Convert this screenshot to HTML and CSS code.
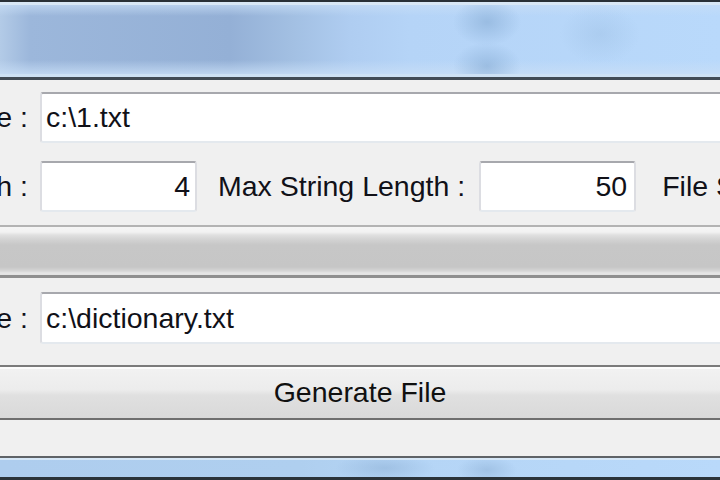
FILE: index.html
```html
<!DOCTYPE html>
<html>
<head>
<meta charset="utf-8">
<link rel="stylesheet" href="styles.css">
</head>
<body>
<div class="window">
  <div class="titlebar"></div>
  <div class="form">
    <div class="row row-first">
      <div class="label"><span>Output File :</span></div>
      <div class="field field-wide">c:\1.txt</div>
    </div>
    <div class="row row-second">
      <div class="label"><span>Min String Length :</span></div>
      <div class="field field-num">4</div>
      <div class="inline-label">Max String Length :</div>
      <div class="field field-num field-num2">50</div>
      <div class="inline-label inline-label-last">File Size :</div>
    </div>
    <div class="splitter"></div>
    <div class="row row-third">
      <div class="label"><span>Dictionary File :</span></div>
      <div class="field field-wide">c:\dictionary.txt</div>
    </div>
    <div class="button">Generate File</div>
    <div class="statusbar"></div>
  </div>
</div>
</body>
</html>
```

FILE: styles.css
```css
html, body {
  margin: 0;
  padding: 0;
  width: 720px;
  height: 480px;
  overflow: hidden;
  background: #f0f0f0;
}

.window {
  width: 720px;
  height: 480px;
  display: flex;
  flex-direction: column;
  font-family: "Liberation Sans", Arial, sans-serif;
  font-size: 28.5px;
  color: #111118;
  overflow: hidden;
}

.titlebar {
  height: 80px;
  flex: 0 0 80px;
  box-sizing: border-box;
  border-top: 2px solid #293036;
  border-bottom: 3px solid #414b55;
  box-shadow: inset 0 3px 0 #d8e7f5, inset 0 -3px 0 #cde1f4;
  background:
    radial-gradient(ellipse 34px 24px at 487px 20px, rgba(135,172,212,0.6), rgba(135,172,212,0)),
    radial-gradient(ellipse 34px 24px at 487px 64px, rgba(135,172,212,0.6), rgba(135,172,212,0)),
    radial-gradient(ellipse 40px 30px at 600px 32px, rgba(150,185,222,0.35), rgba(150,185,222,0)),
    linear-gradient(to bottom, rgba(200,222,246,0.85) 0, rgba(200,222,246,0) 14px, rgba(200,222,246,0) 58px, rgba(200,222,246,0.85) 73px),
    linear-gradient(to right, #b3cbe7 0, #9cb7db 30px, #94b0d6 230px, #a2bfe2 290px, #afcdf1 350px, #b5d4f7 410px, #b9d9fb 720px);
}

.form {
  display: flex;
  flex-direction: column;
  padding-top: 12px;
  flex: 1;
}

.row {
  display: flex;
  align-items: center;
  height: 51px;
  flex: 0 0 51px;
  white-space: nowrap;
}

.row-second { margin-top: 18px; }
.row-third { margin-top: 14px; height: 52px; flex-basis: 52px; }

.label {
  width: 28px;
  flex: 0 0 28px;
  margin-right: 12px;
  display: flex;
  justify-content: flex-end;
  overflow: hidden;
  white-space: nowrap;
}

.field {
  box-sizing: border-box;
  height: 100%;
  background: #ffffff;
  border: 2px solid #dcdde2;
  border-top-color: #a7a8ad;
  border-bottom-color: #e4e9ee;
  border-radius: 3px;
  display: flex;
  align-items: center;
  padding: 0 4px;
  white-space: nowrap;
}

.field-wide {
  flex: 0 0 700px;
}

.field-num {
  flex: 0 0 157px;
  justify-content: flex-end;
  padding-right: 5px;
}

.field-num2 {
  padding-right: 7px;
}

.inline-label {
  margin-left: 21px;
  margin-right: 14px;
  white-space: nowrap;
}

.inline-label-last {
  margin-left: 26px;
  margin-right: 0;
}

.splitter {
  margin-top: 13px;
  height: 53px;
  flex: 0 0 53px;
  box-sizing: border-box;
  border-top: 2px solid #b3b3b3;
  border-bottom: 3px solid #8f8f8f;
  background: linear-gradient(to bottom,
    #f5f5f5 0, #f2f2f2 5px, #e0e0e0 8px, #d4d4d4 12px,
    #c7c7c7 18px, #c6c6c6 40px, #d6d6d6 44px, #e6e6e6 46px, #e2e2e2 48px);
}

.button {
  height: 55px;
  flex: 0 0 55px;
  box-sizing: border-box;
  border-top: 2px solid #7b7b7b;
  border-bottom: 2px solid #6f6f6f;
  box-shadow: inset 0 2px 0 #fcfcfc;
  background: linear-gradient(to bottom, #f2f2f2 0, #ececec 45%, #e0e0e0 55%, #d9d9d9 100%);
  display: flex;
  align-items: center;
  justify-content: center;
  color: #101010;
  margin-top: 21px;
}

.statusbar {
  margin-top: 36px;
  height: 24px;
  flex: 0 0 24px;
  box-sizing: border-box;
  border-top: 2px solid #5f6367;
  border-bottom: 3px solid #2b3339;
  box-shadow: inset 0 2px 0 #d6e7f7;
  background:
    radial-gradient(ellipse 50px 14px at 385px 10px, rgba(140,175,212,0.5), rgba(140,175,212,0)),
    radial-gradient(ellipse 30px 14px at 487px 12px, rgba(140,175,212,0.5), rgba(140,175,212,0)),
    linear-gradient(to right, #aecdee 0, #afcfef 300px, #b5d5f6 420px, #b9d9fa 720px);
}
```
